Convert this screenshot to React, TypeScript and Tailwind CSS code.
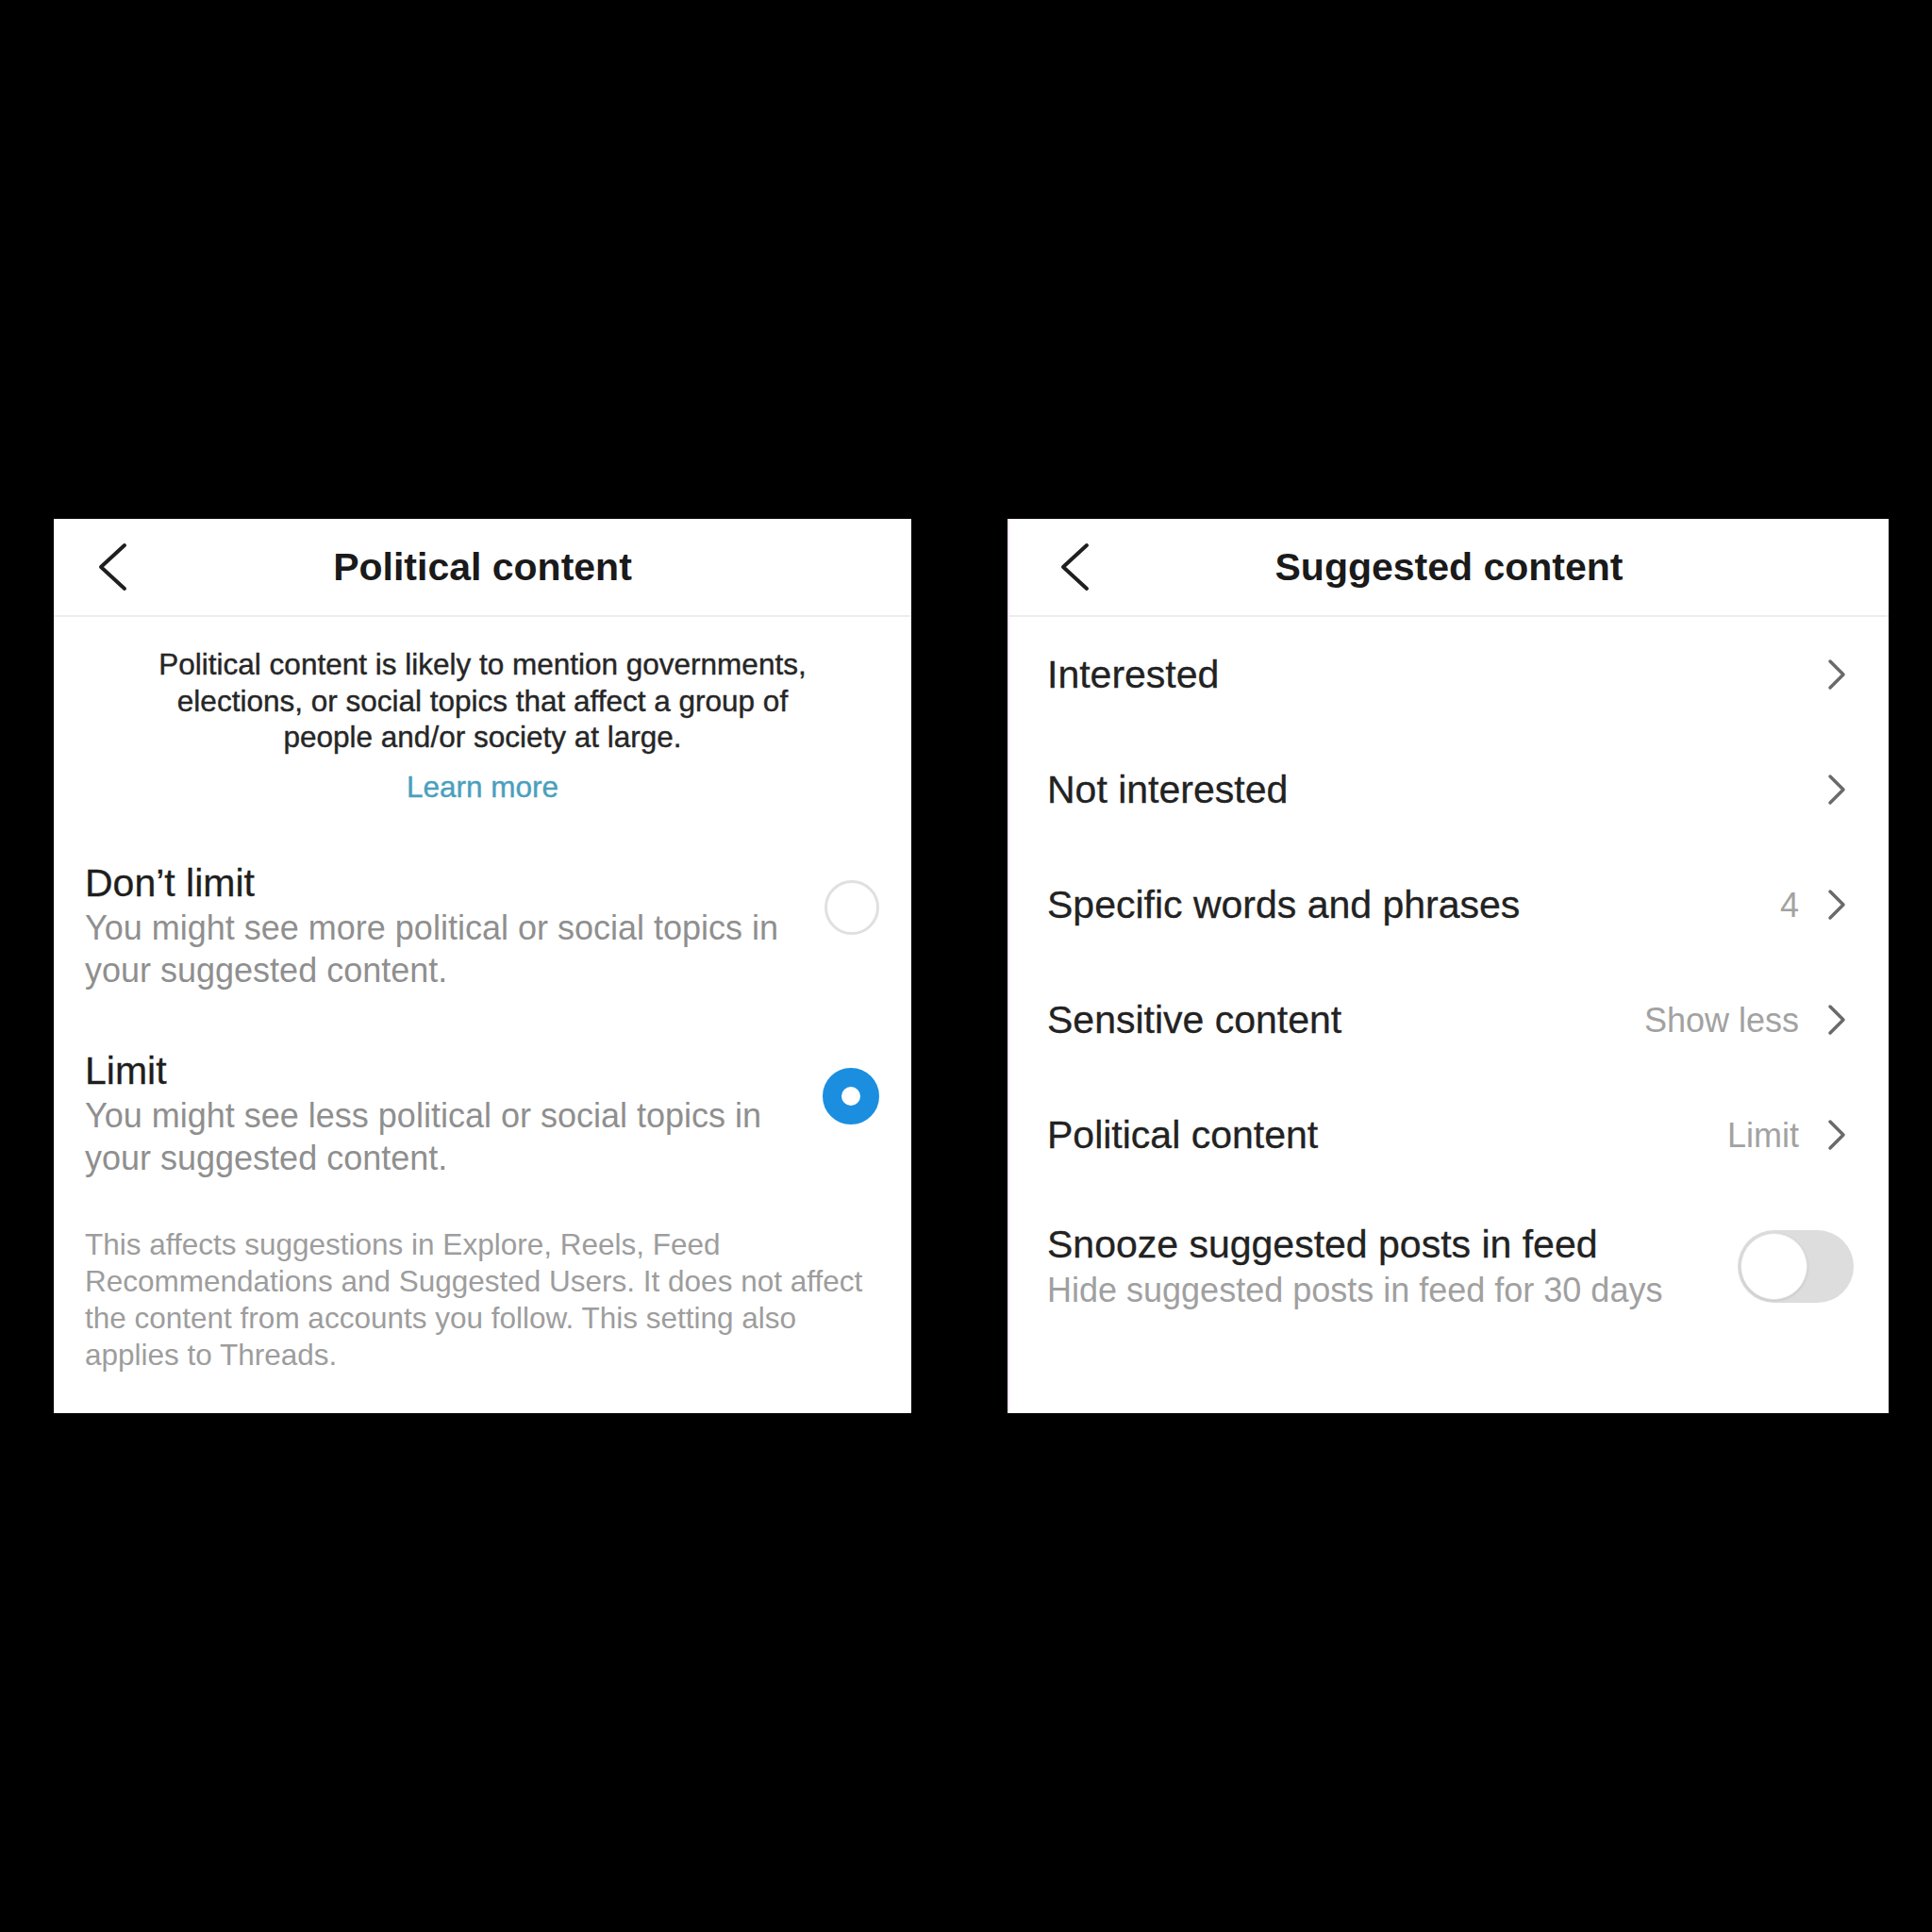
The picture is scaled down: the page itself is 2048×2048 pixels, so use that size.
import React, { useState } from "react";

const font = { fontFamily: '"Liberation Sans", Arial, sans-serif' };

function BackChevron() {
  return (
    <svg width="32" height="52" viewBox="0 0 32 52" fill="none">
      <path d="M29 3 L4 26 L29 49" stroke="#1f1f1f" strokeWidth="4" strokeLinecap="round" strokeLinejoin="round" />
    </svg>
  );
}

function RowChevron() {
  return (
    <svg width="20" height="34" viewBox="0 0 20 34" fill="none">
      <path d="M3 3 L17 17 L3 31" stroke="#6a6a6a" strokeWidth="3.5" strokeLinecap="round" strokeLinejoin="round" />
    </svg>
  );
}

function Header({ title, backOffset }: { title: string; backOffset: string }) {
  return (
    <div className="grid h-[104px] grid-cols-[1fr_auto_1fr] items-center border-b-2 border-[#ededed]">
      <div className={`flex items-center ${backOffset}`}>
        <BackChevron />
      </div>
      <h1 className="text-[41px] font-bold leading-[50px] text-[#1a1a1a]">{title}</h1>
      <div />
    </div>
  );
}

function Radio({ checked }: { checked: boolean }) {
  return checked ? (
    <div className="h-[60px] w-[60px] shrink-0 rounded-full border-[20px] border-[#1b8ee0] bg-white" />
  ) : (
    <div className="h-[58px] w-[58px] shrink-0 rounded-full border-[3px] border-[#e0e0e0] bg-white" />
  );
}

function PoliticalContent() {
  const [limit, setLimit] = useState(true);
  const options = [
    { key: false, title: "Don’t limit", desc: "You might see more political or social topics in your suggested content." },
    { key: true, title: "Limit", desc: "You might see less political or social topics in your suggested content." },
  ];

  return (
    <div className="h-[948px] w-[909px] shrink-0 bg-white">
      <Header title="Political content" backOffset="pl-[46px]" />

      <p className="pt-[31px] text-center text-[31.5px] leading-[38.5px] text-[#262626] [-webkit-text-stroke:0.4px_#262626]">
        Political content is likely to mention governments,
        <br />
        elections, or social topics that affect a group of
        <br />
        people and/or society at large.
      </p>
      <p className="mt-[14px] text-center text-[31.5px] leading-[38px] text-[#4b9fbd] [-webkit-text-stroke:0.4px_#4b9fbd]">
        Learn more
      </p>

      <div className="mt-[58px] flex flex-col gap-[59px]">
        {options.map(o => (
          <div
            key={o.title}
            onClick={() => setLimit(o.key)}
            className="flex cursor-pointer items-start justify-between pl-[33px] pr-[34px]"
          >
            <div className="w-[760px]">
              <div className="text-[41px] leading-[50px] text-[#1e1e1e] [-webkit-text-stroke:0.3px_#1e1e1e]">{o.title}</div>
              <div className="text-[36px] leading-[45px] text-[#8f8f8f]">{o.desc}</div>
            </div>
            <div className="mt-[22px]">
              <Radio checked={limit === o.key} />
            </div>
          </div>
        ))}
      </div>

      <p className="mt-[50px] px-[33px] text-[31.5px] leading-[39px] text-[#9d9d9d]">
        This affects suggestions in Explore, Reels, Feed Recommendations and Suggested Users. It does not affect
        the content from accounts you follow. This setting also applies to Threads.
      </p>
    </div>
  );
}

const rows = [
  { label: "Interested", value: "" },
  { label: "Not interested", value: "" },
  { label: "Specific words and phrases", value: "4" },
  { label: "Sensitive content", value: "Show less" },
  { label: "Political content", value: "Limit" },
];

function SuggestedContent() {
  const [snooze, setSnooze] = useState(false);

  return (
    <div className="h-[948px] w-[934px] shrink-0 border-l-2 border-[#f7e3f4] bg-white">
      <Header title="Suggested content" backOffset="pl-[53px]" />

      {rows.map(r => (
        <div key={r.label} className="flex h-[122px] items-center justify-between pl-[40px] pr-[45px]">
          <span className="text-[41px] leading-[50px] text-[#222222] [-webkit-text-stroke:0.3px_#222222]">{r.label}</span>
          <div className="flex items-center gap-[30px]">
            {r.value && <span className="text-[36px] leading-[45px] text-[#a2a2a2]">{r.value}</span>}
            <RowChevron />
          </div>
        </div>
      ))}

      <div className="flex items-center justify-between pl-[40px] pr-[37px] pt-[30px]">
        <div>
          <div className="text-[41px] leading-[50px] text-[#222222] [-webkit-text-stroke:0.3px_#222222]">
            Snooze suggested posts in feed
          </div>
          <div className="text-[36px] leading-[47px] text-[#a0a0a0]">Hide suggested posts in feed for 30 days</div>
        </div>
        <button
          onClick={() => setSnooze(!snooze)}
          className={`flex h-[77px] w-[123px] items-center rounded-full p-[3px] ${
            snooze ? "justify-end bg-[#1b8ee0]" : "justify-start bg-[#dddddd]"
          }`}
        >
          <span className="h-[71px] w-[71px] rounded-full border border-[#e4e4e4] bg-white shadow-[0_1px_3px_rgba(0,0,0,0.12)]" />
        </button>
      </div>
    </div>
  );
}

export default function App() {
  return (
    <div className="flex h-[2048px] w-[2048px] items-start gap-[102px] bg-black pl-[57px] pt-[550px]" style={font}>
      <PoliticalContent />
      <SuggestedContent />
    </div>
  );
}
